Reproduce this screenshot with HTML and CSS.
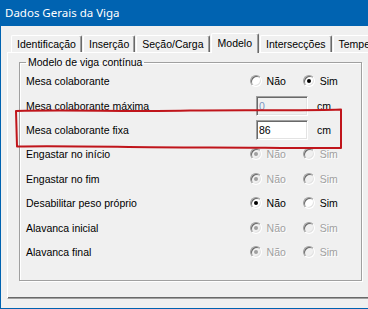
FILE: index.html
```html
<!DOCTYPE html>
<html lang="pt-BR">
<head>
    <meta charset="UTF-8">
    <meta name="viewport" content="width=device-width, initial-scale=1.0">
    <title>Dados Gerais da Viga</title>
    <link rel="stylesheet" href="styles.css">
</head>
<body>
    <div class="window">
        <div class="titlebar">Dados Gerais da Viga</div>
        <div class="client">
            <div class="tabs">
                <div class="tab">Identificação</div>
                <div class="tab">Inserção</div>
                <div class="tab">Seção/Carga</div>
                <div class="tab active">Modelo</div>
                <div class="tab">Intersecções</div>
                <div class="tab">Temperatura</div>
            </div>
            <div class="panel">
                <fieldset class="group">
                    <legend>Modelo de viga contínua</legend>
                    <div class="row">
                        <span class="row-label">Mesa colaborante</span>
                        <span class="option"><span class="circle"></span>Não</span>
                        <span class="option"><span class="circle on"></span>Sim</span>
                    </div>
                    <div class="row">
                        <span class="row-label">Mesa colaborante máxima</span>
                        <input class="field" type="text" value="0" disabled>
                        <span class="unit">cm</span>
                    </div>
                    <div class="row">
                        <span class="row-label">Mesa colaborante fixa</span>
                        <input class="field" type="text" value="86">
                        <span class="unit">cm</span>
                    </div>
                    <div class="row">
                        <span class="row-label">Engastar no início</span>
                        <span class="option disabled"><span class="circle on"></span>Não</span>
                        <span class="option disabled"><span class="circle"></span>Sim</span>
                    </div>
                    <div class="row">
                        <span class="row-label">Engastar no fim</span>
                        <span class="option disabled"><span class="circle on"></span>Não</span>
                        <span class="option disabled"><span class="circle"></span>Sim</span>
                    </div>
                    <div class="row">
                        <span class="row-label">Desabilitar peso próprio</span>
                        <span class="option"><span class="circle on"></span>Não</span>
                        <span class="option"><span class="circle"></span>Sim</span>
                    </div>
                    <div class="row">
                        <span class="row-label">Alavanca inicial</span>
                        <span class="option disabled"><span class="circle on"></span>Não</span>
                        <span class="option disabled"><span class="circle"></span>Sim</span>
                    </div>
                    <div class="row">
                        <span class="row-label">Alavanca final</span>
                        <span class="option disabled"><span class="circle on"></span>Não</span>
                        <span class="option disabled"><span class="circle"></span>Sim</span>
                    </div>
                </fieldset>
            </div>
        </div>

        <!-- marcação vermelha desenhada à mão -->
        <svg class="mark" width="368" height="309" viewBox="0 0 368 309">
            <path d="M16 111 C 70 109.5, 130 112, 190 110.5 C 250 109.5, 300 111, 341 109.5 L 341 148 C 290 148.5, 240 147, 190 147.5 C 130 147.5, 70 145.5, 17 146.5 Z" />
        </svg>
    </div>
</body>
</html>
```

FILE: styles.css
```css
body {
    margin: 0;
    padding: 0;
    width: 368px;
    height: 309px;
    overflow: hidden;
    background: #f0f0f0;
    font-family: "Liberation Sans", Arial, sans-serif;
    font-size: 10.5px;
    color: #000;
}
.window {
    position: relative;
    width: 390px;
    height: 309px;
    box-sizing: border-box;
    border-left: 1px solid #0063b1;
    border-bottom: 1px solid #0063b1;
    background: #f0f0f0;
}
.titlebar {
    height: 26px;
    line-height: 26px;
    padding-left: 4px;
    background: #0063b1;
    color: #fff;
    font-family: "Noto Sans", sans-serif;
    font-size: 11.5px;
}
.client {
    padding: 7px 0 0 6px;
}
.tabs {
    display: flex;
    align-items: flex-start;
    height: 19px;
    padding-left: 4px;
}
.tab {
    height: 17px;
    margin-top: 2px;
    margin-right: 1px;
    padding: 0 5px;
    box-sizing: border-box;
    line-height: 16px;
    white-space: nowrap;
    border-top: 1px solid #fff;
    border-left: 1px solid #fff;
    border-right: 1px solid #696969;
    border-radius: 2px 2px 0 0;
    box-shadow: inset -1px 0 0 #a0a0a0;
}
.tab.active {
    position: relative;
    z-index: 1;
    height: 20px;
    margin-top: 0;
    padding: 1px 6px 0;
    background: #f0f0f0;
}
.panel {
    height: 247px;
    box-sizing: border-box;
    border-top: 1px solid #fff;
    border-left: 1px solid #fff;
    border-bottom: 1px solid #a0a0a0;
    box-shadow: inset 0 -1px 0 #696969;
    padding: 2px 0 0 11px;
}
.group {
    width: 343px;
    box-sizing: border-box;
    margin: 0;
    padding: 0 6px 16px 6px;
    border: 1px solid #a0a0a0;
    box-shadow: inset 1px 1px 0 #fff, 1px 1px 0 #fff;
    min-inline-size: 0;
}
.group legend {
    padding: 0 2px;
    line-height: 14px;
}
.row {
    display: flex;
    align-items: center;
    height: 24.43px;
}
.row-label {
    width: 230px;
    white-space: nowrap;
}
.option {
    display: flex;
    align-items: center;
    width: 55px;
    margin-left: 1px;
    margin-right: -1px;
}
.option.disabled {
    color: #a0a0a0;
    text-shadow: 1px 1px 0 #fff;
}
.circle {
    position: relative;
    width: 12px;
    height: 12px;
    margin-right: 5px;
    box-sizing: border-box;
    border-radius: 50%;
    border: 1px solid;
    border-color: #a0a0a0 #fff #fff #a0a0a0;
    box-shadow: inset 1px 1px 0 #696969, inset -1px -1px 0 #e3e3e3;
    background: #fff;
}
.circle.on::after {
    content: "";
    position: absolute;
    left: 3px;
    top: 3px;
    width: 4px;
    height: 4px;
    border-radius: 50%;
    background: #000;
}
.option.disabled .circle {
    background: #f0f0f0;
}
.option.disabled .circle.on::after {
    background: #a0a0a0;
}
.field {
    width: 52px;
    height: 20px;
    margin: 0;
    padding: 0 0 0 2px;
    box-sizing: border-box;
    border: 1px solid;
    border-color: #a0a0a0 #fff #fff #a0a0a0;
    box-shadow: inset 1px 1px 0 #696969, inset -1px -1px 0 #e3e3e3;
    background: #fff;
    font-family: inherit;
    font-size: inherit;
    color: #000;
    outline: none;
}
.field:disabled {
    background: #f0f0f0;
    color: #7d95c0;
    -webkit-text-fill-color: #7d95c0;
    opacity: 1;
}
.unit {
    margin-left: 9px;
}
.mark {
    position: absolute;
    left: -1px;
    top: 0;
    pointer-events: none;
}
.mark path {
    fill: none;
    stroke: #c0151b;
    stroke-width: 2;
    stroke-linejoin: round;
}
```
